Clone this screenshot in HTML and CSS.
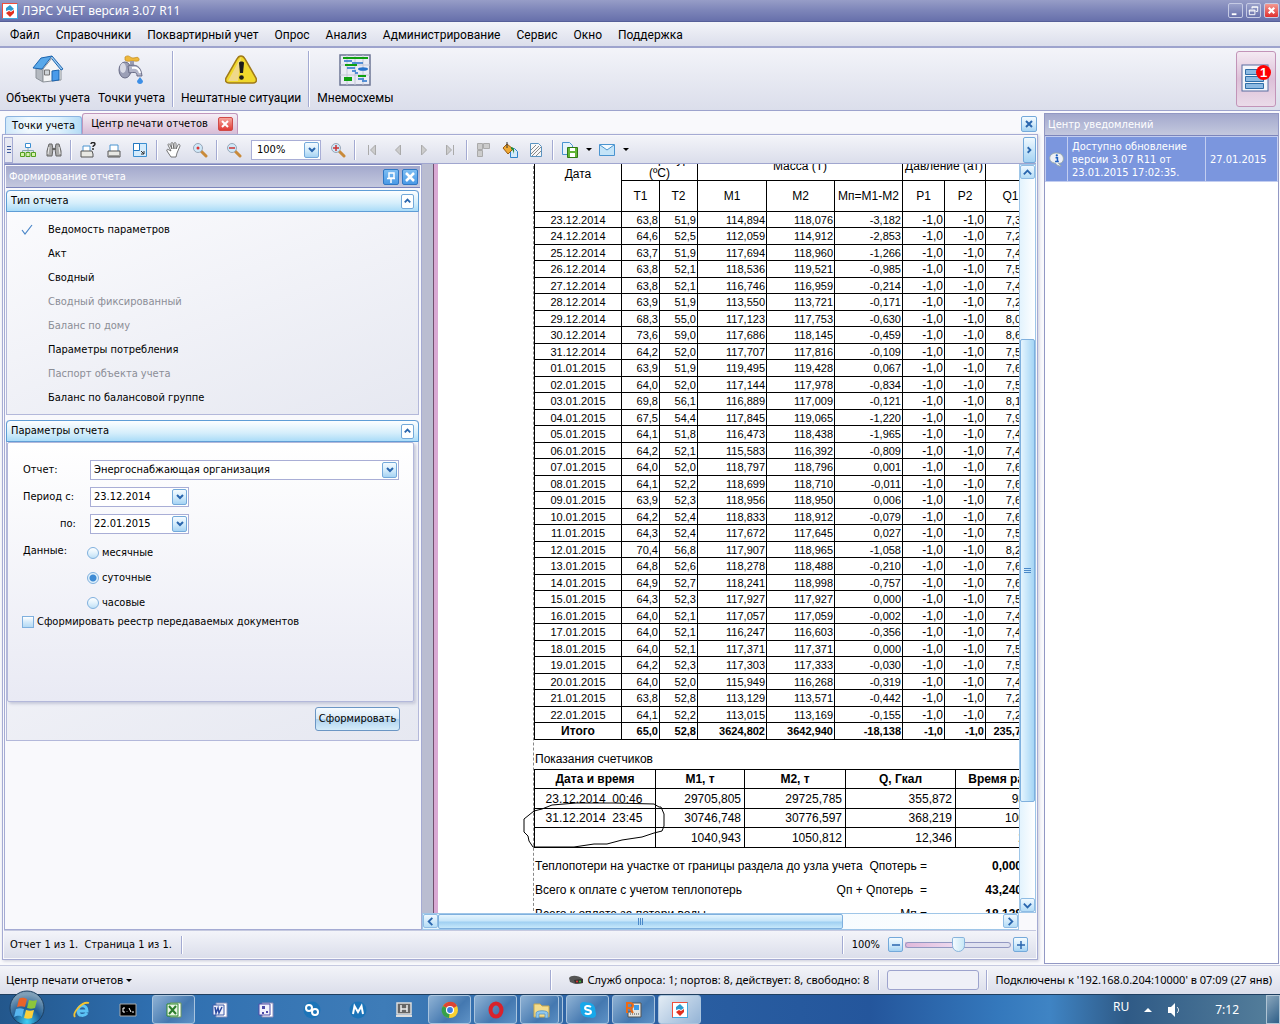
FILE: index.html
```html
<!DOCTYPE html>
<html lang="ru">
<head>
  <meta charset="UTF-8">
  <title>ЛЭРС УЧЕТ версия 3.07 R11</title>
  <meta name="viewport" content="width=device-width, initial-scale=1.0">
  <link rel="stylesheet" href="styles.css">
</head>
<body>

  <header class="titlebar">
    <svg class="logo" viewBox="0 0 16 16"><rect width="16" height="16" fill="#f04e3a"/><path d="M16 0v16H0z" fill="#3fa9e0"/><rect x="1" y="1" width="14" height="14" fill="#fff"/><path d="M8 2l4 4-3 2-2-1-3 1V5z" fill="#2b9bd0"/><path d="M8 14l-4-4 3-2 2 1 3-2v3z" fill="#e0301e"/></svg>
    <h1>ЛЭРС УЧЕТ версия 3.07 R11</h1>
    <div class="window-buttons">
      <button aria-label="Свернуть"><svg viewBox="0 0 14 14"><path d="M3 10h5v2H3z" fill="#fff"/></svg></button>
      <button aria-label="Восстановить"><svg viewBox="0 0 14 14" fill="none" stroke="#fff"><path d="M5.500 5V3h6v5H9.500M5 3.500h7M2.500 6.500h6v5h-6zM2 7.500h7"/></svg></button>
      <button class="close" aria-label="Закрыть"><svg viewBox="0 0 14 14"><path d="M4 4l6 6M10 4l-6 6" stroke="#fff" stroke-width="2.400"/></svg></button>
    </div>
  </header>

  <nav class="menu">
    <a href="#">Файл</a>
    <a href="#">Справочники</a>
    <a href="#">Поквартирный учет</a>
    <a href="#">Опрос</a>
    <a href="#">Анализ</a>
    <a href="#">Администрирование</a>
    <a href="#">Сервис</a>
    <a href="#">Окно</a>
    <a href="#">Поддержка</a>
  </nav>

  <div class="ribbon">
    <button class="big-button">
      <svg viewBox="0 0 32 32"><path d="M4 14l7 2v12l-7-4z" fill="#b4b9c0" stroke="#8c9299"/><path d="M11 15l9-11 9 11v11l-18 2z" fill="#f4f5f6" stroke="#8c9299"/><path d="M1 14L9 4l11-2-10 13z" fill="#58a8ea" stroke="#1c64ae"/><path d="M20 2l11 13-2 1-9-11" fill="#9ccdf4" stroke="#1c64ae"/><path d="M20 17l7-1v10l-7 1z" fill="#4a9bea" stroke="#1c64ae"/><path d="M12.500 16h5v5h-5z" fill="#cfd4d8" stroke="#777"/></svg>
      <span>Объекты учета</span>
    </button>
    <button class="big-button">
      <svg viewBox="0 0 32 32"><path d="M9 3c4-3 5 1 8 1s5-2 6 1-4 2-6 2-7 1-8-1z" fill="#eeb83c" stroke="#c08a1e" stroke-width=".7"/><path d="M14 7h4v7h-4z" fill="#999cb2"/><ellipse cx="9" cy="16" rx="6" ry="8" fill="#9b9fb6" stroke="#6a6d87"/><ellipse cx="7" cy="14" rx="3" ry="5" fill="#d8dae6"/><path d="M12 12c7-2 13-1 14 10h-5c0-4-2-4-8-3z" fill="#b2b5c8" stroke="#6a6d87"/><path d="M16 14c5-1 7 1 8 5" stroke="#fff" stroke-width="2" fill="none"/><path d="M24 23l3 4c0 4-6 4-6 0z" fill="#3d8fe6"/></svg>
      <span>Точки учета</span>
    </button>
    <i class="divider"></i>
    <button class="big-button">
      <svg viewBox="0 0 32 32"><path d="M16 2c2 0 3 1 4 3l11 19c1 3 0 5-3 5H4c-3 0-4-2-3-5L12 5c1-2 2-3 4-3z" fill="#f0d82c" stroke="#a07a18" stroke-width="1.500"/><path d="M16 3L3 27h10z" fill="#f0d98a"/><path d="M14 9c0-2 5-2 5 0l-1 10h-3z" fill="#1c1c1c"/><circle cx="16.500" cy="23.500" r="2.300" fill="#1c1c1c"/></svg>
      <span>Нештатные ситуации</span>
    </button>
    <i class="divider"></i>
    <button class="big-button">
      <svg viewBox="0 0 32 32"><path d="M1 1h30v30H1z" fill="#e9ebf5" stroke="#6c7694" stroke-width="1.500"/><path d="M8 1v30M16 1v30M24 1v30M1 11h30M1 21h30" stroke="#c3c7d6"/><path d="M4 4h25M6 11h12M19 22h8" stroke="#0fa010" stroke-width="2"/><path d="M5 23h8v4H5z" fill="#0fa010"/><path d="M5 7h8M13 9h11M8 14h8M13 17h4M16 19h3M19 25h6M23 27h5" stroke="#2673cc" stroke-width="1.500"/><ellipse cx="24" cy="15" rx="5" ry="1.800" fill="#2673cc"/></svg>
      <span>Мнемосхемы</span>
    </button>
    <button class="notify-button" aria-label="Уведомления">
      <svg viewBox="0 0 32 32"><rect x="2" y="2" width="26" height="26" fill="#f4f6fb" stroke="#5a6ca0"/><path d="M5.500 6.500h18v5h-18zM5.500 13.500h18v5h-18zM5.500 20.500h18v5h-18z" fill="#8cb9e2" stroke="#2f6ea8"/></svg>
      <b>1</b>
    </button>
  </div>

  <main>
    <section class="workspace">
      <div class="tabs">
        <button class="tab">Точки учета</button>
        <div class="tab active">Центр печати отчетов
          <button class="tab-close" aria-label="Закрыть вкладку"><svg viewBox="0 0 12 12"><path d="M3 3l6 6M9 3l-6 6" stroke="#fff" stroke-width="2"/></svg></button>
        </div>
        <button class="blue-button close-all" aria-label="Закрыть"><svg viewBox="0 0 12 12"><path d="M3 3l6 6M9 3l-6 6" stroke="#2a66ae" stroke-width="2"/></svg></button>
      </div>

      <div class="document">
        <div class="tools">
          <i class="grip"></i>
          <button aria-label="Структура"><svg viewBox="0 0 16 16" fill="none"><path d="M8 6v3M2.500 11V8.500h11V11M8 9v2" stroke="#8aa"/><path d="M5.500 1.500h5v4h-5z" fill="#fff" stroke="#3b8ed0"/><path d="M.5 10.500h4v4h-4zM6 10.500h4v4H6zM11.500 10.500h4v4h-4z" fill="#d6f0b0" stroke="#52a020"/></svg></button>
          <button aria-label="Поиск"><svg viewBox="0 0 16 16" fill="#aaa" stroke="#666"><path d="M3 2h3l1 5-1 7H1V9zM13 2h-3L9 7l1 7h5V9z"/><path d="M6 7h4" stroke-width="2"/><path d="M3 5l-1 7M13 5l1 7" stroke="#eee"/></svg></button>
          <i class="divider"></i>
          <button aria-label="Печать с параметрами"><svg viewBox="0 0 16 16"><path d="M3 4h7v6H3z" fill="#fff" stroke="#4a94d0"/><path d="M1 9h11l1 3v3H1z" fill="#e8e8e4" stroke="#555"/><path d="M11 2c0-2 4-2 4 0s-2 1-2 3M13 6v2" stroke="#222" stroke-width="1.400" fill="none"/></svg></button>
          <button aria-label="Печать"><svg viewBox="0 0 16 16"><path d="M4 3h8v7H4z" fill="#fff" stroke="#4a94d0"/><path d="M2 9h12v6H2z" fill="#e8e8e4" stroke="#555"/><path d="M3 14h10" stroke="#555"/></svg></button>
          <button aria-label="Параметры страницы"><svg viewBox="0 0 16 16"><path d="M1.500 1.500h13v13h-13z" fill="#d4ebfc" stroke="#3b8ed0"/><path d="M1.500 1.500h6v7h-6z" fill="#fff" stroke="#2277c0"/><path d="M9 9l3 3m0-3v3H9" stroke="#333" fill="none"/></svg></button>
          <i class="divider"></i>
          <button aria-label="Рука"><svg viewBox="0 0 16 16"><path d="M5 15L1 9c-1-2 1-2 2-1l2 1-3-6c0-2 2-1 2 0l2 4-1-5c0-2 2-2 2 0l1 5V2c0-2 2-2 2 0v5l2-4c1-2 2 0 2 1l-3 7-1 4z" fill="#fff" stroke="#555" stroke-width=".8"/></svg></button>
          <button aria-label="Лупа"><svg viewBox="0 0 16 16"><path d="M9 9l5 5" stroke="#c98a3a" stroke-width="3" stroke-linecap="round"/><circle cx="6" cy="6" r="4.500" fill="#cfe8f8" stroke="#98a6b8"/><circle cx="6" cy="6" r="1.500" fill="#d33"/></svg></button>
          <i class="divider"></i>
          <button aria-label="Уменьшить"><svg viewBox="0 0 16 16"><path d="M9 9l5 5" stroke="#c98a3a" stroke-width="3" stroke-linecap="round"/><circle cx="6" cy="6" r="4.500" fill="#cfe8f8" stroke="#98a6b8"/><path d="M3 6h6" stroke="#c33" stroke-width="1.500"/></svg></button>
          <label class="combo zoom-combo">
            <select aria-label="Масштаб"><option>100%</option></select>
            <span class="blue-button"><svg viewBox="0 0 12 12"><path d="M3 4l3 3 3-3" stroke="#2a66ae" stroke-width="2" fill="none"/></svg></span>
          </label>
          <button aria-label="Увеличить"><svg viewBox="0 0 16 16"><path d="M9 9l5 5" stroke="#c98a3a" stroke-width="3" stroke-linecap="round"/><circle cx="6" cy="6" r="4.500" fill="#cfe8f8" stroke="#98a6b8"/><path d="M3 6h6M6 3v6" stroke="#c33" stroke-width="1.500"/></svg></button>
          <i class="divider"></i>
          <button aria-label="Первая страница"><svg viewBox="0 0 16 16" fill="#ccc" stroke="#aaa"><path d="M4.500 3v10M11.500 3v10l-5-5z"/></svg></button>
          <button aria-label="Предыдущая страница"><svg viewBox="0 0 16 16" fill="#ccc" stroke="#aaa"><path d="M10.500 3v10l-5-5z"/></svg></button>
          <button aria-label="Следующая страница"><svg viewBox="0 0 16 16" fill="#ccc" stroke="#aaa"><path d="M5.500 3v10l5-5z"/></svg></button>
          <button aria-label="Последняя страница"><svg viewBox="0 0 16 16" fill="#ccc" stroke="#aaa"><path d="M11.500 3v10M4.500 3v10l5-5z"/></svg></button>
          <i class="divider"></i>
          <button aria-label="Несколько страниц"><svg viewBox="0 0 16 16" fill="#ccc" stroke="#aaa"><path d="M1.500 1.500h5v6h-5zM1.500 8.500h5v6h-5zM7.500 1.500h6v5h-6z"/></svg></button>
          <button aria-label="Цвет"><svg viewBox="0 0 16 16"><path d="M8.500 6.500h4l3 3v6h-7z" fill="#d4eafa" stroke="#2f83c8"/><path d="M1 6l4-4 6 5-5 5z" fill="#f0aa35" stroke="#9a5a10"/><path d="M5 0v6" stroke="#333"/><path d="M9 5c4 0 3 4 3 7-1-3-1-4-3-5z" fill="#258a35"/></svg></button>
          <button aria-label="Водяной знак"><svg viewBox="0 0 16 16"><path d="M2.500 1.500h8l3 3v10h-11z" fill="#f8f8f8" stroke="#5a93c0"/><path d="M3 8l5-5M3 12l8-8M4 14l9-9M8 14l5-5" stroke="#888"/></svg></button>
          <i class="divider"></i>
          <button aria-label="Экспорт"><svg viewBox="0 0 16 16"><path d="M.5 .5h7l3 3v9H.5z" fill="#e6f3fc" stroke="#4a94d0"/><path d="M5.500 5.500h10v10h-10z" fill="#62b636" stroke="#2f7a14"/><path d="M8 6h5v3H8zM8 11h5v4H8z" fill="#fff"/></svg></button>
          <button class="drop" aria-label="Форматы экспорта"></button>
          <button aria-label="Отправить"><svg viewBox="0 0 16 16"><path d="M.5 2.500h15v11H.5z" fill="#c4e4f8" stroke="#4a94d0"/><path d="M1 3l7 5 7-5" fill="#f2f9fe" stroke="#4a94d0"/></svg></button>
          <button class="drop" aria-label="Форматы отправки"></button>
          <button class="overflow" aria-label="Ещё"><svg viewBox="0 0 12 12"><path d="M4 3l3 3-3 3" stroke="#2a66ae" stroke-width="2" fill="none"/></svg></button>
        </div>

        <div class="document-body">
          <aside class="dock">
            <div class="dock-title">
              <h2>Формирование отчета</h2>
              <button aria-label="Закрепить"><svg viewBox="0 0 14 14"><path d="M5 3h5v5H5zM3 8.500h8M7 9v4" stroke="#fff" fill="none" stroke-width="1.500"/></svg></button>
              <button aria-label="Закрыть"><svg viewBox="0 0 14 14"><path d="M3 3l8 8M11 3l-8 8" stroke="#fff" stroke-width="2.500"/></svg></button>
            </div>

            <section class="group">
              <div class="group-head">
                <h3>Тип отчета</h3>
                <button aria-label="Свернуть"><svg viewBox="0 0 12 12"><path d="M3 7l3-3 3 3" stroke="#2a66ae" stroke-width="2" fill="none"/></svg></button>
              </div>
              <ul class="types">
                <li class="checked"><svg viewBox="0 0 12 12"><path d="M1 6l3 4 7-9" fill="none" stroke="#4a86c8" stroke-width="1.200"/></svg>Ведомость параметров</li>
                <li>Акт</li>
                <li>Сводный</li>
                <li class="off">Сводный фиксированный</li>
                <li class="off">Баланс по дому</li>
                <li>Параметры потребления</li>
                <li class="off">Паспорт объекта учета</li>
                <li>Баланс по балансовой группе</li>
              </ul>
            </section>

            <section class="group">
              <div class="group-head">
                <h3>Параметры отчета</h3>
                <button aria-label="Свернуть"><svg viewBox="0 0 12 12"><path d="M3 7l3-3 3 3" stroke="#2a66ae" stroke-width="2" fill="none"/></svg></button>
              </div>
              <form class="params">
                <div class="sheetlet">
                  <div class="fields">
                    <label for="report">Отчет:</label>
                    <div class="combo">
                      <select id="report"><option>Энергоснабжающая организация</option></select>
                      <span class="blue-button"><svg viewBox="0 0 12 12"><path d="M3 4l3 3 3-3" stroke="#2a66ae" stroke-width="2" fill="none"/></svg></span>
                    </div>
                    <label for="from">Период с:</label>
                    <div class="combo date">
                      <input id="from" type="text" value="23.12.2014">
                      <button type="button" class="blue-button" aria-label="Календарь"><svg viewBox="0 0 12 12"><path d="M3 4l3 3 3-3" stroke="#2a66ae" stroke-width="2" fill="none"/></svg></button>
                    </div>
                    <label for="to" class="to">по:</label>
                    <div class="combo date">
                      <input id="to" type="text" value="22.01.2015">
                      <button type="button" class="blue-button" aria-label="Календарь"><svg viewBox="0 0 12 12"><path d="M3 4l3 3 3-3" stroke="#2a66ae" stroke-width="2" fill="none"/></svg></button>
                    </div>
                    <span>Данные:</span>
                    <div class="radios">
                      <label><input type="radio" name="kind">месячные</label>
                      <label><input type="radio" name="kind" checked>суточные</label>
                      <label><input type="radio" name="kind">часовые</label>
                    </div>
                  </div>
                  <label class="registry"><input type="checkbox">Сформировать реестр передаваемых документов</label>
                </div>
                <button type="button" class="submit">Сформировать</button>
              </form>
            </section>
          </aside>

          <div class="preview">
            <div class="viewport">
              <div class="page">
                <div class="sheet">
                  <table class="report">
                    <colgroup><col class="w87"><col class="w38"><col class="w38"><col class="w69"><col class="w68"><col class="w68"><col class="w42"><col class="w41"><col class="w50"></colgroup>
                    <thead>
                      <tr class="top"><th rowspan="2" class="day">Дата</th><th colspan="2">Температура (ºC)</th><th colspan="3">Масса (Т)</th><th colspan="2">Давление (ат)</th><th></th></tr>
                      <tr class="names"><th>T1</th><th>T2</th><th>M1</th><th>M2</th><th>Мп=M1-M2</th><th>P1</th><th>P2</th><th>Q1</th></tr>
                    </thead>
                    <tbody id="days"></tbody>
                    <tfoot>
                      <tr><td>Итого</td><td>65,0</td><td>52,8</td><td>3624,802</td><td>3642,940</td><td>-18,138</td><td>-1,0</td><td>-1,0</td><td class="cut">235,7</td></tr>
                    </tfoot>
                  </table>

                  <h4>Показания счетчиков</h4>
                  <table class="meters">
                    <colgroup><col class="w121"><col class="w89"><col class="w101"><col class="w110"><col class="w112"></colgroup>
                    <tr><th>Дата и время</th><th>M1, т</th><th>M2, т</th><th>Q, Гкал</th><th>Время работы</th></tr>
                    <tr><td>23.12.2014 &nbsp;00:46</td><td>29705,805</td><td>29725,785</td><td>355,872</td><td>98</td></tr>
                    <tr><td>31.12.2014 &nbsp;23:45</td><td>30746,748</td><td>30776,597</td><td>368,219</td><td>100</td></tr>
                    <tr><td></td><td>1040,943</td><td>1050,812</td><td>12,346</td><td>2</td></tr>
                  </table>

                  <div class="totals">
                    <p><span>Теплопотери на участке от границы раздела до узла учета</span><span>Qпотерь =</span><b>0,000</b></p>
                    <p><span>Всего к оплате с учетом теплопотерь</span><span>Qп + Qпотерь &nbsp;=</span><b>43,240</b></p>
                    <p><span>Всего к оплате за потери воды</span><span>Мп =</span><b>18,138</b></p>
                  </div>

                  <svg class="mark" viewBox="0 0 142 46" fill="none" stroke="#000"><path d="M52 1h38l40 1 5 3h2l3 7v12l-2 5-8 2-12 4-20 3-15 4h-13l-20 3H9l-4-6-1-5-4-4V17l10-8 8-2 10-4 24-2z"/></svg>
                </div>
              </div>
              <div class="vscroll">
                <button aria-label="Вверх"><svg viewBox="0 0 12 12"><path d="M2 8l4-4 4 4" stroke="#2a66ae" stroke-width="2" fill="none"/></svg></button>
                <span class="thumb"></span>
                <button aria-label="Вниз"><svg viewBox="0 0 12 12"><path d="M2 4l4 4 4-4" stroke="#2a66ae" stroke-width="2" fill="none"/></svg></button>
              </div>
            </div>
            <div class="hscroll">
              <button aria-label="Влево"><svg viewBox="0 0 12 12"><path d="M8 2L4 6l4 4" stroke="#2a66ae" stroke-width="2" fill="none"/></svg></button>
              <span class="thumb"></span>
              <button aria-label="Вправо"><svg viewBox="0 0 12 12"><path d="M4 2l4 4-4 4" stroke="#2a66ae" stroke-width="2" fill="none"/></svg></button>
            </div>
          </div>
        </div>

        <div class="page-status">
          <span>Отчет 1 из 1. &nbsp;Страница 1 из 1.</span>
          <i class="divider"></i>
          <div class="zoom">
            <i class="divider"></i>
            <label for="zoom">100%</label>
            <button class="blue-button" aria-label="Меньше"><svg viewBox="0 0 12 12"><path d="M2 6h8" stroke="#2a66ae" stroke-width="1.500"/></svg></button>
            <input id="zoom" type="range" min="0" max="100" value="50">
            <button class="blue-button" aria-label="Больше"><svg viewBox="0 0 12 12"><path d="M2 6h8M6 2v8" stroke="#2a66ae" stroke-width="1.500"/></svg></button>
          </div>
        </div>
      </div>
    </section>

    <aside class="notices">
      <h2>Центр уведомлений</h2>
      <table>
        <tr>
          <td class="mark-cell"><svg viewBox="0 0 16 16"><path d="M8 1c10 0 9 12 2 11l3 3c-3 0-5-1-6-3C-2 11-1 1 8 1z" fill="#eef0f6" stroke="#9aa"/><path d="M7 6h2v4M6.500 10h4" stroke="#1d5fc0" stroke-width="1.600" fill="none"/><circle cx="8.300" cy="3.700" r="1.200" fill="#1d5fc0"/></svg></td>
          <td>Доступно обновление версии 3.07 R11 от 23.01.2015 17:02:35.</td>
          <td class="date-cell">27.01.2015</td>
        </tr>
      </table>
    </aside>
  </main>

  <footer class="status">
    <button class="current">Центр печати отчетов <i class="caret"></i></button>
    <i class="divider"></i>
    <span class="polling"><svg viewBox="0 0 14 10"><path d="M0 3c2-3 9-3 14 1v4c-5 2-9 1-13-1z" fill="#555"/><path d="M5 5l9-1v4L6 8z" fill="#333"/><circle cx="8" cy="6.500" r="1" fill="#e33"/><circle cx="11" cy="6.500" r="1" fill="#3c3"/></svg>Служб опроса: 1; портов: 8, действует: 8, свободно: 8</span>
    <i class="divider"></i>
    <span class="progress"></span>
    <i class="divider"></i>
    <span class="connection">Подключены к '192.168.0.204:10000' в 07:09 (27 янв)</span>
  </footer>

  <div class="taskbar">
    <button class="start" aria-label="Пуск"><svg viewBox="0 0 36 36"><defs><radialGradient id="orb" cx=".5" cy=".9" r=".8"><stop offset="0" stop-color="#3fd0f5"/><stop offset=".5" stop-color="#1d5c94"/><stop offset="1" stop-color="#7f9fb8"/></radialGradient></defs><circle cx="18" cy="18" r="17" fill="url(#orb)" stroke="#1d3f60"/><path d="M10 9c3-2 5-1 8 0l-2 8c-3-1-5-1-8 0z" fill="#e8632a"/><path d="M20 10c3 1 5 1 8 0l-2 8c-3 1-5 1-8 0z" fill="#8cc63c"/><path d="M7 19c3-1 5-1 8 0l-2 8c-3-2-5-1-8 0z" fill="#58b6ee"/><path d="M17 20c3 1 5 1 8 0l-2 8c-3 1-5 1-8 0z" fill="#fbd03a"/></svg></button>
    <button aria-label="Internet Explorer"><svg viewBox="0 0 18 18" fill="none"><path d="M4 10h10c0-7-9-7-9 0 0 6 7 5 9 2" stroke="#5cc2f4" stroke-width="3"/><path d="M2 16C-1 12 9 0 16 2" stroke="#f4c430" stroke-width="1.800"/></svg></button>
    <button aria-label="Командная строка"><svg viewBox="0 0 18 18"><path d="M1 3h16v12H1z" fill="#000" stroke="#aaa"/><path d="M6 7H4v4h2M8 8v0M8 10.500v.5M10 7l2 4M13 11h2" stroke="#fff" fill="none"/></svg></button>
    <button class="open" aria-label="Excel"><svg viewBox="0 0 18 18"><path d="M5 2h11v14H5z" fill="#fff" stroke="#6a9a5a"/><path d="M2 3h11v12H2z" fill="#e9f5e4" stroke="#2f8a2f"/><path d="M4 5l7 8M11 5l-7 8" stroke="#2c7c2c" stroke-width="2"/></svg></button>
    <button aria-label="Word"><svg viewBox="0 0 18 18"><path d="M5 2h11v14H5z" fill="#fff" stroke="#7a8aba"/><path d="M2 4h11v10H2z" fill="#edf1fb" stroke="#3c5aa8"/><path d="M4 6l1 6 2-5 1 5 3-6" stroke="#2c4aa0" stroke-width="1.500" fill="none"/></svg></button>
    <button aria-label="Visio"><svg viewBox="0 0 18 18"><path d="M5 2h11v14H5z" fill="#fff" stroke="#8a8aba"/><path d="M2 3h11v11H2z" fill="#f2f1fb" stroke="#4c4aa8"/><path d="M5 5h3v3H5zM9 10h2v2H9zM5 11h2v2H5z" fill="#4c4aa8"/></svg></button>
    <button aria-label="Службы"><svg viewBox="0 0 18 18"><circle cx="9" cy="9" r="8.500" fill="#1c74b8"/><g fill="none" stroke="#fff" stroke-width="2"><circle cx="6" cy="7" r="3"/><circle cx="12" cy="11" r="3"/></g></svg></button>
    <button aria-label="M"><svg viewBox="0 0 18 18"><circle cx="9" cy="9" r="8.500" fill="#1c74b8"/><path d="M4 13L5.500 5 9 11l3.500-6L14 13" stroke="#fff" stroke-width="2" fill="none"/></svg></button>
    <button aria-label="Архив"><svg viewBox="0 0 18 18"><path d="M2 2h14v11H2z" fill="#666" stroke="#ddd" stroke-width="1.500"/><path d="M6 4v7M12 4v7M6 8h6" stroke="#eee" stroke-width="1.500"/><path d="M1 15h16" stroke="#ddd" stroke-width="2"/></svg></button>
    <button class="open" aria-label="Chrome"><svg viewBox="0 0 18 18"><circle cx="9" cy="9" r="8" fill="#f8d030"/><path d="M9 9L2 5c4-6 12-5 14 0z" fill="#dd4434"/><path d="M9 9l-1 8C1 16-1 9 2 5z" fill="#35a04c"/><circle cx="9" cy="9" r="3.500" fill="#3b7de0" stroke="#fff" stroke-width="1.200"/></svg></button>
    <button class="open" aria-label="Opera"><svg viewBox="0 0 18 18"><ellipse cx="9" cy="9" rx="5.500" ry="6.500" fill="none" stroke="#d8222c" stroke-width="4"/></svg></button>
    <button class="open stack" aria-label="Проводник"><svg viewBox="0 0 18 18"><path d="M1 3h6l2 2h7v11H1z" fill="#f3dc8c" stroke="#c8a84c"/><path d="M3 17v-5c0-3 12-3 12 0v5h-3v-4H6v4z" fill="#8fc8ee" stroke="#4a8ac0" stroke-width=".7"/></svg></button>
    <button class="open" aria-label="Skype"><svg viewBox="0 0 18 18"><circle cx="9" cy="9" r="7.500" fill="#17a8ea"/><circle cx="5" cy="5" r="4" fill="#17a8ea"/><circle cx="13" cy="13" r="4" fill="#17a8ea"/><path d="M12 6C9 4 6 5 6 7c0 3 6 1 6 4 0 2-4 3-6 1" stroke="#fff" stroke-width="2" fill="none"/></svg></button>
    <button class="open" aria-label="Radmin"><svg viewBox="0 0 18 18"><path d="M7 2h9v14H3v-5h4z" fill="#e4e4e0" stroke="#555"/><path d="M9 4h5v5H9z" fill="#3b9be8"/><path d="M5 13h9" stroke="#444" stroke-dasharray="1 1"/><path d="M2 12V2h3c4 0 4 5 0 5H2m3 0l3 5" stroke="#ee6a14" stroke-width="2" fill="none"/></svg></button>
    <button class="open front" aria-label="ЛЭРС УЧЕТ"><svg viewBox="0 0 16 16"><rect width="16" height="16" fill="#f04e3a"/><path d="M16 0v16H0z" fill="#3fa9e0"/><rect x="1" y="1" width="14" height="14" fill="#fff"/><path d="M8 2l4 4-3 2-2-1-3 1V5z" fill="#2b9bd0"/><path d="M8 14l-4-4 3-2 2 1 3-2v3z" fill="#e0301e"/></svg></button>
    <div class="tray">
      <span class="lang">RU</span>
      <svg class="up" viewBox="0 0 8 6"><path d="M0 5l4-4 4 4z" fill="#fff"/></svg>
      <svg class="sound" viewBox="0 0 14 14"><path d="M1 4h3l4-4v14l-4-4H1z" fill="#fff"/><path d="M10 4c2 2 2 4 0 6" stroke="#fff" fill="none"/></svg>
      <span class="clock">7:12</span>
      <i class="desktop"></i>
    </div>
  </div>

  <script src="report.js"></script>
</body>
</html>
```
FILE: styles.css
```css
* {
  box-sizing: border-box;
}

body {
  margin: 0;
  height: 100vh;
  display: flex;
  flex-direction: column;
  overflow: hidden;
  background: #f9f9fc;
  color: #000;
  font: 11px/14px "DejaVu Sans Condensed", "Noto Sans", sans-serif;
}

button, input, select {
  font: inherit;
  color: inherit;
  margin: 0;
  padding: 0;
  border: 0;
  background: none;
}

h1, h2, h3, h4, p, ul {
  margin: 0;
  padding: 0;
  font-size: inherit;
  font-weight: normal;
}

svg {
  display: block;
}

.divider {
  flex: none;
  width: 2px;
  background: #a3aad2;
  border-right: 1px solid #fff;
}

/* Window frame */

.titlebar {
  flex: none;
  height: 22px;
  display: flex;
  align-items: center;
  padding: 0 1px 0 2px;
  color: #fff;
  background: linear-gradient(#979dc7, #7f87ba 45%, #6770ab);
  border-bottom: 1px solid #565f98;
  font: 12px/16px "Noto Sans", sans-serif;
}

.titlebar h1 {
  flex: 1;
  margin-left: 4px;
}

.logo {
  width: 16px;
  height: 16px;
}

.window-buttons {
  display: flex;
  gap: 3px;
}

.window-buttons button {
  width: 15px;
  height: 15px;
  border: 1px solid #c5cae4;
  border-radius: 2px;
  background: linear-gradient(#9aa1ca, #6a73ad);
}

.window-buttons .close {
  background: linear-gradient(#f39a92, #e03030);
}

.menu {
  flex: none;
  height: 26px;
  display: flex;
  align-items: center;
  gap: 16px;
  padding: 2px 0 0 10px;
  background: linear-gradient(#f3f4f9, #dbdeeb);
  border-bottom: 2px solid #9da3cd;
  font: 12px/16px Roboto, sans-serif;
}

.menu a {
  color: #000;
  text-decoration: none;
}

.ribbon {
  flex: none;
  height: 63px;
  display: flex;
  padding: 3px 4px 3px 2px;
  background: linear-gradient(#f3f4f9, #dbdeeb);
  border-bottom: 1px solid #9da3cd;
  font: 12px/16px Roboto, sans-serif;
}

.big-button {
  display: flex;
  flex-direction: column;
  align-items: center;
  gap: 4px;
  padding: 3px 4px 0;
}

.big-button svg {
  width: 32px;
  height: 32px;
}

.ribbon .divider {
  margin: 0 3px;
}

.notify-button {
  position: relative;
  width: 40px;
  margin-left: auto;
  border: 1px solid #c294b8;
  border-radius: 3px;
  background: linear-gradient(#f4e9f2, #ddc0d8 50%, #eadbe9);
}

.notify-button svg {
  width: 32px;
  height: 32px;
  margin: auto;
}

.notify-button b {
  position: absolute;
  top: 13px;
  right: 4px;
  width: 15px;
  height: 15px;
  border-radius: 8px;
  background: #f00;
  color: #fff;
  font: bold 13px/15px "Liberation Sans", sans-serif;
}

main {
  flex: 1;
  min-height: 0;
  display: flex;
  padding-top: 2px;
}

/* Tabs */

.workspace {
  flex: 1;
  min-width: 0;
  display: flex;
  flex-direction: column;
  padding: 0 6px 5px 2px;
}

.tabs {
  height: 21px;
  display: flex;
  align-items: flex-end;
  padding-left: 3px;
}

.tab {
  height: 18px;
  padding: 0 6px;
  border: 1px solid #8cb4e0;
  border-bottom: 0;
  border-radius: 3px 3px 0 0;
  background: linear-gradient(90deg, #cfe8fa, #f2faff 30%, #e0f2fd 70%, #b4dcf6);
}

.tab.active {
  height: 21px;
  display: flex;
  align-items: center;
  gap: 10px;
  padding: 0 4px 0 8px;
  border-color: #c096bc;
  background: linear-gradient(#f5eef5, #d8bcd6);
}

.tab-close {
  width: 15px;
  height: 14px;
  border: 1px solid #d04a48;
  border-radius: 2px;
  background: linear-gradient(#f6a49c, #e03a34);
}

.tab-close svg {
  height: 12px;
  margin: auto;
}

.blue-button {
  flex: none;
  width: 16px;
  height: 16px;
  display: grid;
  place-items: center;
  border: 1px solid #74a9da;
  border-radius: 2px;
  background: linear-gradient(#f4fbff, #d4ecfb 50%, #a5d3f3);
}

.blue-button svg {
  width: 12px;
  height: 12px;
}

.close-all {
  margin: 0 1px 2px auto;
}

.document {
  flex: 1;
  min-height: 0;
  display: flex;
  flex-direction: column;
  border: 1px solid #a5abd3;
  padding: 1px;
  box-shadow: 1px 1px 3px #c8cad8;
}

/* Preview toolbar */

.tools {
  flex: none;
  height: 28px;
  display: flex;
  align-items: center;
  background: linear-gradient(#f3f4f9, #dbdeeb);
  border-bottom: 1px solid #a0a6cf;
}

.tools button {
  flex: none;
  width: 26px;
  height: 24px;
  display: grid;
  place-items: center;
}

.tools button svg {
  width: 16px;
  height: 16px;
}

.tools .divider {
  height: 20px;
  margin: 0 3px;
}

.grip {
  width: 9px;
  height: 26px;
  margin-right: 2px;
  border: 1px solid #a5abd3;
  background: repeating-linear-gradient(#3d5a9c 0 1px, transparent 1px 3px) center / 4px 7px no-repeat #e6e8f2;
}

.tools .drop {
  width: 11px;
}

.drop::after,
.caret {
  content: "";
  display: inline-block;
  border: 3px solid transparent;
  border-top-color: #000;
  border-bottom: 0;
}

.tools .overflow {
  width: 13px;
  height: 26px;
  margin-left: auto;
  border: 1px solid #74a9da;
  border-radius: 2px;
  background: linear-gradient(#f0f9ff, #a5d3f3);
}

.tools .overflow svg {
  width: 11px;
}

.combo {
  height: 20px;
  display: flex;
  align-items: center;
  padding-right: 1px;
  background: #fff;
  border: 1px solid #a9aed6;
}

.combo select,
.combo input {
  flex: 1;
  min-width: 0;
  padding-left: 3px;
  appearance: none;
  outline: 0;
}

.combo .blue-button {
  width: 15px;
}

.zoom-combo {
  width: 70px;
  margin: 0 4px;
}

.zoom-combo select {
  padding-left: 5px;
}

/* Report parameters */

.document-body {
  flex: 1;
  min-height: 0;
  display: flex;
}

.dock {
  flex: none;
  width: 418px;
  padding: 1px;
  border: 1px solid #a5abd3;
  border-top-color: #7c85bb;
}

.dock-title {
  height: 22px;
  display: flex;
  align-items: center;
  gap: 3px;
  padding: 0 2px 0 3px;
  margin-bottom: 2px;
  color: #fff;
  background: linear-gradient(#a3a9cd, #c4c8de);
  border-bottom: 1px solid #7c85bb;
}

.dock-title h2 {
  flex: 1;
}

.dock-title button {
  width: 16px;
  height: 16px;
  border: 1px solid #2f77c4;
  border-radius: 2px;
  background: linear-gradient(#7dbdf2, #4a9ae6);
}

.group {
  margin: 0 1px 5px 0;
  border: 1px solid #b3b8da;
  border-top: 0;
  border-radius: 4px 4px 0 0;
  background: linear-gradient(160deg, #fcfcfe, #e6e8f1);
}

.group-head {
  height: 22px;
  display: flex;
  align-items: center;
  justify-content: space-between;
  padding: 0 4px;
  margin: 0 -1px;
  border: 1px solid #5f9dd6;
  border-radius: 4px 4px 0 0;
  background: linear-gradient(#fdfeff, #d5eefb 60%, #aadcf8);
}

.group-head button {
  width: 13px;
  height: 15px;
  border: 1px solid #74a9da;
  border-radius: 2px;
  background: #fff;
}

.types {
  padding: 6px 0 4px;
  list-style: none;
}

.types li {
  height: 24px;
  display: flex;
  align-items: center;
  padding-left: 41px;
}

.types .checked {
  gap: 15px;
  padding-left: 14px;
}

.types svg {
  width: 12px;
  height: 12px;
}

.types .off {
  color: #8b8d96;
}

.sheetlet {
  height: 260px;
  margin-right: 4px;
  padding: 17px 14px 0 15px;
  border: 1px solid #b3b8da;
  border-radius: 2px;
  background: linear-gradient(#fff, #e9eaf4);
  box-shadow: 2px 2px 3px #c6c9da;
}

.fields {
  display: grid;
  grid-template-columns: 67px 1fr;
  row-gap: 7px;
}

.fields > label,
.fields > span {
  line-height: 20px;
}

.fields .to {
  padding-left: 37px;
}

.date {
  width: 99px;
}

.radios {
  display: flex;
  flex-direction: column;
  gap: 11px;
  padding-top: 5px;
  margin-left: -3px;
}

.radios label,
.registry {
  display: flex;
  align-items: center;
  gap: 3px;
}

.radios input {
  appearance: none;
  width: 12px;
  height: 12px;
  border: 1px solid #7fb0de;
  border-radius: 6px;
  background: linear-gradient(#fff, #e2f2fc 50%, #bfe0f6);
}

.radios input:checked {
  background: radial-gradient(circle, #3f8bd4 0 3px, #e2f2fc 4px);
}

.registry {
  margin: 5px 0 0 -1px;
}

.registry input {
  appearance: none;
  width: 12px;
  height: 12px;
  border: 1px solid #7fb0de;
  background: linear-gradient(#fff, #d4eafa 50%, #b4daf4);
}

.submit {
  display: block;
  width: 85px;
  height: 24px;
  margin: 5px 18px 9px auto;
  border: 1px solid #6b96c4;
  border-radius: 3px;
  background: linear-gradient(#f6fbff, #d5e8f6 50%, #b0d3ee 51%, #d5ecfa);
}

/* Preview */

.preview {
  flex: 1;
  min-width: 0;
  display: flex;
  flex-direction: column;
}

.viewport {
  flex: 1;
  min-height: 0;
  display: flex;
  background: #babdd1;
}

.page {
  flex: 1;
  min-width: 0;
  overflow: hidden;
  margin-left: 12px;
  padding-left: 95px;
  background: #fff;
  border-left: 4px solid #d9a9d4;
  box-shadow: -1px 0 #70506e;
}

.sheet {
  position: relative;
  width: 560px;
  margin-top: -13px;
  border-left: 1px dashed #888;
  font: 12px/14px "Liberation Sans", sans-serif;
}

.report,
.meters {
  border-collapse: collapse;
  table-layout: fixed;
}

.report {
  width: 501px;
}

.report th,
.report td,
.meters th,
.meters td {
  border: 1px solid #000;
  padding: 0 1px;
}

.report th {
  font-weight: normal;
}

.top {
  height: 28px;
}

.names {
  height: 31px;
}

.report .day {
  padding-bottom: 15px;
}

.report td {
  font-size: 11px;
  line-height: 12px;
  text-align: right;
}

.report td:first-child {
  text-align: center;
}

.report td:nth-child(7),
.report td:nth-child(8) {
  font-size: 12px;
}

.report .cut {
  padding-right: 14px;
}

.report tbody tr {
  height: 16px;
}

.report tbody tr:nth-child(even) {
  height: 17px;
}

.report tfoot tr {
  height: 17px;
}

.report tfoot td {
  font-weight: bold;
}

.report tfoot td:nth-child(n) {
  font-size: 11px;
}

.report tfoot td:first-child {
  font-size: 12px;
}

.w38 { width: 38px; }
.w41 { width: 41px; }
.w42 { width: 42px; }
.w50 { width: 50px; }
.w68 { width: 68px; }
.w69 { width: 69px; }
.w87 { width: 87px; }
.w89 { width: 89px; }
.w101 { width: 101px; }
.w110 { width: 110px; }
.w112 { width: 112px; }
.w121 { width: 121px; }

.sheet h4 {
  padding: 12px 0 3px 1px;
}

.meters {
  width: 533px;
}

.meters tr {
  height: 19px;
}

.meters tr:nth-child(2n) {
  height: 20px;
}

.meters td {
  text-align: right;
  padding-right: 3px;
}

.meters td:first-child {
  text-align: center;
}

.meters td:last-child {
  padding-right: 42px;
}

.totals {
  padding: 11px 0 0 1px;
}

.totals p {
  height: 24px;
  display: flex;
  width: 487px;
}

.totals span:nth-child(2) {
  margin-left: auto;
}

.totals b {
  width: 95px;
  text-align: right;
}

.mark {
  position: absolute;
  left: -10px;
  top: 651px;
  width: 142px;
  height: 46px;
  overflow: visible;
}

.vscroll,
.hscroll {
  flex: none;
  display: flex;
  justify-content: space-between;
  background: linear-gradient(90deg, #e3f3fd, #fff);
  border: 1px solid #9fc6e8;
}

.vscroll {
  width: 17px;
  flex-direction: column;
}

.hscroll {
  height: 17px;
  margin-right: 17px;
}

.vscroll button,
.hscroll button {
  width: 15px;
  height: 14px;
  display: grid;
  place-items: center;
  border: 1px solid #8fbce4;
  border-radius: 2px;
  background: linear-gradient(#f0f9ff, #b4dcf6);
}

.vscroll svg,
.hscroll svg {
  width: 11px;
  height: 11px;
}

.thumb {
  border: 1px solid #7fb0de;
  border-radius: 2px;
}

.vscroll .thumb {
  height: 62%;
  margin-top: 64px;
  background:
    repeating-linear-gradient(#4a88c8 0 1px, transparent 1px 2px) center / 7px 5px no-repeat,
    linear-gradient(90deg, #e6f5fe, #a4d5f5);
}

.hscroll .thumb {
  width: 68%;
  margin-right: auto;
  background:
    repeating-linear-gradient(90deg, #4a88c8 0 1px, transparent 1px 2px) center / 5px 7px no-repeat,
    linear-gradient(#e6f5fe, #c6e5f9 45%, #a0d0f2 55%, #c6e8fb);
}

.page-status {
  flex: none;
  height: 28px;
  display: flex;
  align-items: center;
  gap: 9px;
  padding: 0 8px 0 6px;
  background: linear-gradient(#f3f4f9, #dbdeeb);
  border-top: 1px solid #c5c9e0;
}

.page-status .divider {
  height: 18px;
}

.zoom {
  display: flex;
  align-items: center;
  gap: 8px;
  margin-left: auto;
}

.zoom .blue-button {
  width: 15px;
  height: 15px;
}

.zoom input {
  appearance: none;
  width: 106px;
  height: 16px;
  margin: 0 -6px;
  background: linear-gradient(90deg, #e0b8da, #eedcf0 50%, #e0e2f0 50%) center / 100% 6px no-repeat;
}

.zoom input::-webkit-slider-runnable-track {
  height: 6px;
  border: 1px solid #9298c2;
  border-radius: 3px;
}

.zoom input::-webkit-slider-thumb {
  appearance: none;
  width: 13px;
  height: 15px;
  margin-top: -6px;
  border: 1px solid #88b4dc;
  border-radius: 2px 2px 7px 7px;
  background: linear-gradient(90deg, #f4fbff, #c8e8f6);
}

/* Notifications */

.notices {
  flex: none;
  width: 235px;
  margin: 0 1px 1px 0;
  border: 1px solid #9298c4;
  background: #fff;
}

.notices h2 {
  height: 22px;
  padding: 4px 3px;
  color: #fff;
  background: linear-gradient(#a3a9cd, #c4c8de);
  border-bottom: 1px solid #7c85bb;
}

.notices table {
  width: 100%;
  border-collapse: collapse;
  color: #fff;
  background: #7b96de;
  line-height: 13px;
}

.notices td {
  height: 45px;
  padding: 0 4px;
  border: 1px solid #c2cdf0;
}

.notices .mark-cell {
  width: 22px;
  padding: 0 3px;
}

.notices .date-cell {
  width: 72px;
}

/* Status bar */

.status {
  flex: none;
  height: 29px;
  display: flex;
  align-items: center;
  gap: 7px;
  padding: 0 8px 0 6px;
  background: linear-gradient(#f3f4f9, #dbdeeb);
  border-top: 1px solid #c5c9e0;
  font: 11px/16px "Noto Sans", sans-serif;
}

.status .divider {
  height: 20px;
}

.current {
  margin-right: auto;
}

.caret {
  vertical-align: 2px;
}

.polling {
  display: flex;
  align-items: center;
  gap: 5px;
  padding: 0 2px 0 10px;
}

.polling svg {
  width: 14px;
  height: 10px;
}

.progress {
  width: 92px;
  height: 20px;
  border: 1px solid #9da3cd;
  border-radius: 3px;
  background: #eff0f7;
}

/* Taskbar */

.taskbar {
  position: relative;
  flex: none;
  height: 30px;
  display: flex;
  gap: 3px;
  padding-left: 60px;
  border-top: 1px solid #1f3f60;
  background: linear-gradient(90deg, #23578c, #2f6fb0 12%, #3e7cb8 30%, #2c62a4 46%, #24569c 68%, #3478bc 78%, #3f84c4 82%, #2f5a86 88%, #56809c);
}

.taskbar button {
  width: 43px;
  height: 29px;
  display: grid;
  place-items: center;
}

.taskbar button svg {
  width: 18px;
  height: 18px;
}

.taskbar .open {
  border: 1px solid #a9c4de;
  border-radius: 3px;
  background: linear-gradient(135deg, #8fb2d4, #4478b0 60%, #5e92c6);
}

.taskbar .stack {
  box-shadow: inset -3px 0 #3f73aa, inset -4px 0 #a9c4de;
}

.taskbar .front {
  background: linear-gradient(135deg, #e3ecf5, #94b4d6);
}

.taskbar .front svg {
  width: 16px;
  height: 16px;
}

.taskbar .start {
  position: absolute;
  left: 9px;
  bottom: -2px;
  width: 36px;
  height: 36px;
}

.taskbar .start svg {
  width: 36px;
  height: 36px;
}

.tray {
  display: flex;
  align-items: center;
  margin-left: auto;
  color: #fff;
  font: 12px/16px "Noto Sans", sans-serif;
}

.lang {
  margin-bottom: 5px;
}

.up {
  width: 8px;
  height: 6px;
  margin-left: 15px;
}

.sound {
  width: 14px;
  height: 14px;
  margin: 0 34px 0 15px;
}

.desktop {
  width: 14px;
  height: 29px;
  margin-left: 27px;
  border: 1px solid #b0c4d4;
  background: linear-gradient(135deg, #8aa6bc, #2f5f88);
}
```
FILE: report.js
```js
// дата, T1, T2, M1, M2, Мп, Q1
const days = [
  ['23.12.2014', '63,8', '51,9', '114,894', '118,076', '-3,182', '7,3'],
  ['24.12.2014', '64,6', '52,5', '112,059', '114,912', '-2,853', '7,2'],
  ['25.12.2014', '63,7', '51,9', '117,694', '118,960', '-1,266', '7,4'],
  ['26.12.2014', '63,8', '52,1', '118,536', '119,521', '-0,985', '7,5'],
  ['27.12.2014', '63,8', '52,1', '116,746', '116,959', '-0,214', '7,4'],
  ['28.12.2014', '63,9', '51,9', '113,550', '113,721', '-0,171', '7,2'],
  ['29.12.2014', '68,3', '55,0', '117,123', '117,753', '-0,630', '8,0'],
  ['30.12.2014', '73,6', '59,0', '117,686', '118,145', '-0,459', '8,6'],
  ['31.12.2014', '64,2', '52,0', '117,707', '117,816', '-0,109', '7,5'],
  ['01.01.2015', '63,9', '51,9', '119,495', '119,428', '0,067', '7,6'],
  ['02.01.2015', '64,0', '52,0', '117,144', '117,978', '-0,834', '7,5'],
  ['03.01.2015', '69,8', '56,1', '116,889', '117,009', '-0,121', '8,1'],
  ['04.01.2015', '67,5', '54,4', '117,845', '119,065', '-1,220', '7,9'],
  ['05.01.2015', '64,1', '51,8', '116,473', '118,438', '-1,965', '7,4'],
  ['06.01.2015', '64,2', '52,1', '115,583', '116,392', '-0,809', '7,4'],
  ['07.01.2015', '64,0', '52,0', '118,797', '118,796', '0,001', '7,6'],
  ['08.01.2015', '64,1', '52,2', '118,699', '118,710', '-0,011', '7,6'],
  ['09.01.2015', '63,9', '52,3', '118,956', '118,950', '0,006', '7,6'],
  ['10.01.2015', '64,2', '52,4', '118,833', '118,912', '-0,079', '7,6'],
  ['11.01.2015', '64,3', '52,4', '117,672', '117,645', '0,027', '7,5'],
  ['12.01.2015', '70,4', '56,8', '117,907', '118,965', '-1,058', '8,2'],
  ['13.01.2015', '64,8', '52,6', '118,278', '118,488', '-0,210', '7,6'],
  ['14.01.2015', '64,9', '52,7', '118,241', '118,998', '-0,757', '7,6'],
  ['15.01.2015', '64,3', '52,3', '117,927', '117,927', '0,000', '7,5'],
  ['16.01.2015', '64,0', '52,1', '117,057', '117,059', '-0,002', '7,4'],
  ['17.01.2015', '64,0', '52,1', '116,247', '116,603', '-0,356', '7,4'],
  ['18.01.2015', '64,0', '52,1', '117,371', '117,371', '0,000', '7,5'],
  ['19.01.2015', '64,2', '52,3', '117,303', '117,333', '-0,030', '7,5'],
  ['20.01.2015', '64,0', '52,0', '115,949', '116,268', '-0,319', '7,4'],
  ['21.01.2015', '63,8', '52,8', '113,129', '113,571', '-0,442', '7,2'],
  ['22.01.2015', '64,1', '52,2', '113,015', '113,169', '-0,155', '7,2']
];

const tbody = document.getElementById('days');

days.forEach(day => {
  const row = tbody.insertRow();
  const heat = day[6];
  // давление не измеряется, в архиве всегда -1,0
  [...day.slice(0, 6), '-1,0', '-1,0', heat].forEach(value => {
    row.insertCell().textContent = value;
  });
  row.lastChild.classList.add('cut');
});
```
